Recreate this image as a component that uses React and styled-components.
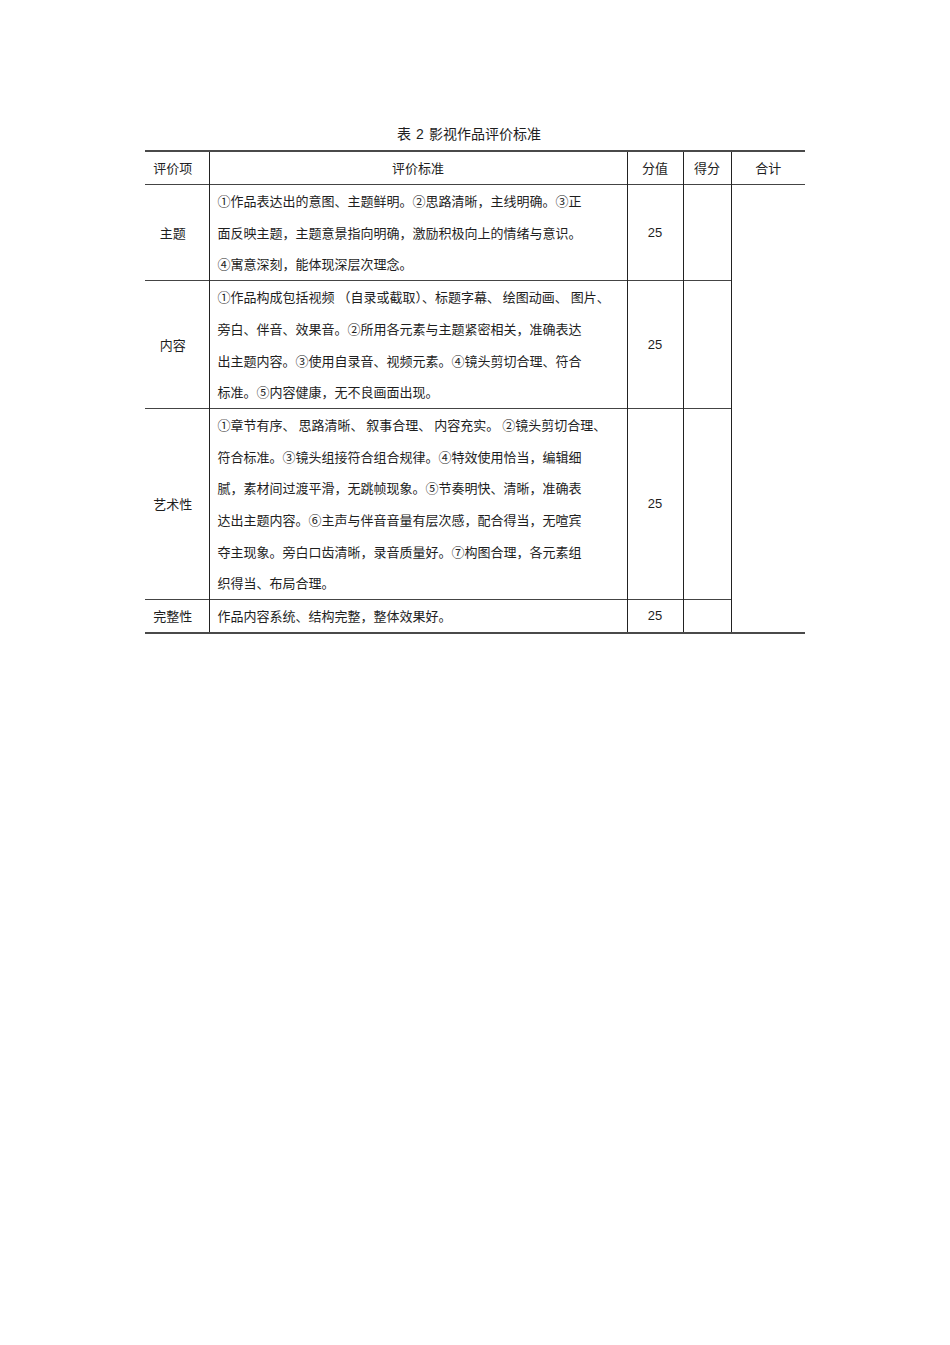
import React from 'react';
import styled, { createGlobalStyle } from 'styled-components';

const GlobalStyle = createGlobalStyle`
  html, body {
    margin: 0;
    padding: 0;
    background: #ffffff;
  }
  body {
    font-family: "Noto Sans CJK SC", "Liberation Sans", sans-serif;
    color: #1e1e1e;
  }
`;

const Page = styled.div`
  width: 950px;
  min-height: 1345px;
  padding: 122px 0 0 145px;
  box-sizing: border-box;
`;

const Title = styled.div`
  width: 660px;
  box-sizing: border-box;
  padding-right: 12px;
  text-align: center;
  font-size: 14px;
  line-height: 22px;
  margin-bottom: 5px;
`;

const Num = styled.span`
  font-family: "Liberation Sans", sans-serif;
  margin: 0 5px;
`;

const Table = styled.table`
  width: 660px;
  border-collapse: collapse;
  table-layout: fixed;
  font-size: 13px;
  border-top: 2px solid #4a4a4a;
  border-bottom: 2px solid #4a4a4a;
`;

const Cell = styled.td`
  padding: 0;
  line-height: 31.7px;
  text-align: ${(p) => (p.$left ? 'left' : 'center')};
  padding-left: ${(p) => (p.$left ? '8px' : '0')};
  padding-right: ${(p) => (p.$first ? '8px' : '0')};
  vertical-align: middle;
  white-space: nowrap;
  border-top: 1px solid #444;
  border-left: ${(p) => (p.$first ? 'none' : '1px solid #222')};
  font-family: ${(p) =>
    p.$num ? '"Liberation Sans", "Noto Sans CJK SC", sans-serif' : 'inherit'};
`;

const HeadCell = styled(Cell).attrs({ as: 'th' })`
  font-weight: normal;
  border-top: none;
  height: 32px;
  line-height: 32px;
`;

const Line = styled.span`
  display: block;
`;

const rows = [
  {
    item: '主题',
    lines: [
      '①作品表达出的意图、主题鲜明。②思路清晰，主线明确。③正',
      '面反映主题，主题意景指向明确，激励积极向上的情绪与意识。',
      '④寓意深刻，能体现深层次理念。',
    ],
  },
  {
    item: '内容',
    lines: [
      '①作品构成包括视频 （自录或截取）、标题字幕、 绘图动画、 图片、',
      '旁白、伴音、效果音。②所用各元素与主题紧密相关，准确表达',
      '出主题内容。③使用自录音、视频元素。④镜头剪切合理、符合',
      '标准。⑤内容健康，无不良画面出现。',
    ],
  },
  {
    item: '艺术性',
    lines: [
      '①章节有序、 思路清晰、 叙事合理、 内容充实。 ②镜头剪切合理、',
      '符合标准。③镜头组接符合组合规律。④特效使用恰当，编辑细',
      '腻，素材间过渡平滑，无跳帧现象。⑤节奏明快、清晰，准确表',
      '达出主题内容。⑥主声与伴音音量有层次感，配合得当，无喧宾',
      '夺主现象。旁白口齿清晰，录音质量好。⑦构图合理，各元素组',
      '织得当、布局合理。',
    ],
  },
  {
    item: '完整性',
    lines: ['作品内容系统、结构完整，整体效果好。'],
  },
];

export default function App() {
  return (
    <>
      <GlobalStyle />
      <Page>
        <Title>
          表<Num>2</Num>影视作品评价标准
        </Title>
        <Table>
          <colgroup>
            <col style={{ width: 64 }} />
            <col style={{ width: 418 }} />
            <col style={{ width: 56 }} />
            <col style={{ width: 48 }} />
            <col style={{ width: 74 }} />
          </colgroup>
          <thead>
            <tr>
              <HeadCell $first>评价项</HeadCell>
              <HeadCell>评价标准</HeadCell>
              <HeadCell>分值</HeadCell>
              <HeadCell>得分</HeadCell>
              <HeadCell>合计</HeadCell>
            </tr>
          </thead>
          <tbody>
            {rows.map((row, i) => (
              <tr key={row.item}>
                <Cell $first>{row.item}</Cell>
                <Cell $left>
                  {row.lines.map((l) => (
                    <Line key={l}>{l}</Line>
                  ))}
                </Cell>
                <Cell $num>25</Cell>
                <Cell />
                {i === 0 && <Cell rowSpan={rows.length} />}
              </tr>
            ))}
          </tbody>
        </Table>
      </Page>
    </>
  );
}
